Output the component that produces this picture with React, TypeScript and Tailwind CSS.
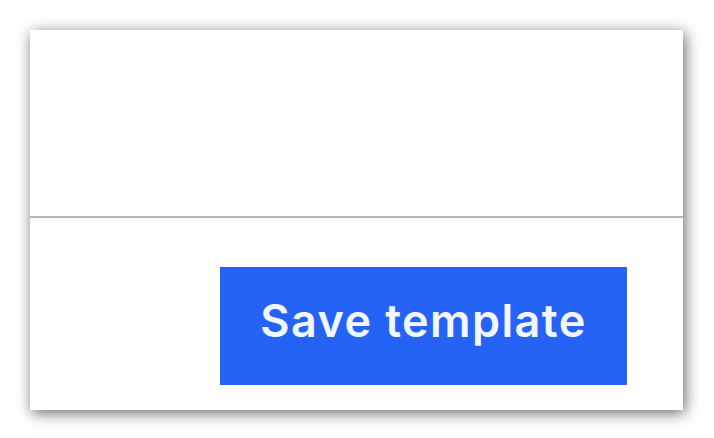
export default function App() {
  return (
    <div className="flex h-[438px] w-[714px] bg-white pl-[30px] pt-[30px]">
      <div className="flex h-[380px] w-[653px] flex-col bg-white shadow-[2px_3px_14px_rgba(0,0,0,0.6)]">
        <div className="h-[186px]" />
        <div className="h-[2px] bg-[#bfb4b4]" />
        <div className="flex flex-1 justify-end pr-[56px] pt-[49px]">
          <button className="h-[118px] w-[407px] bg-[#2563f6] pb-[10px] font-['Inter',sans-serif] text-[45px] font-semibold tracking-[1.4px] text-[#f2f6ff]">
            Save template
          </button>
        </div>
      </div>
    </div>
  );
}
